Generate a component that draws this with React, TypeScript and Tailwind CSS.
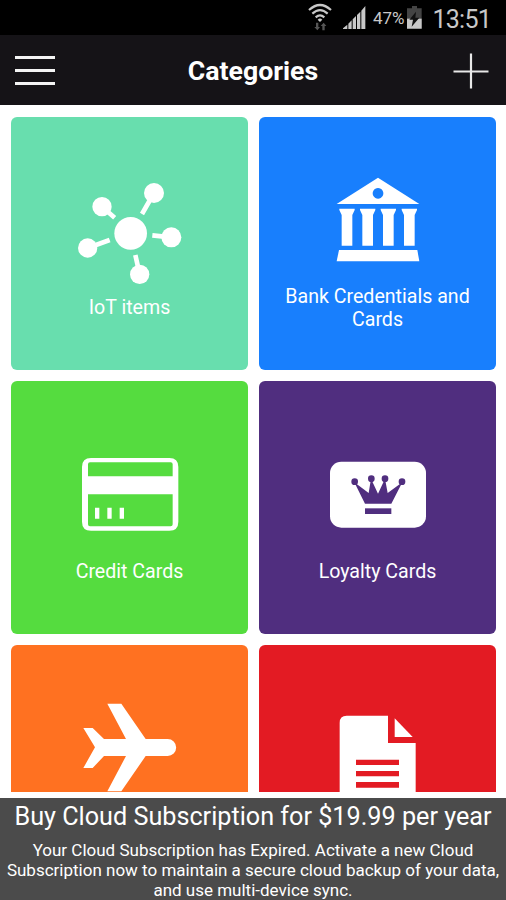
import type { ReactNode } from "react";

type TileProps = {
    color: string;
    viewBox: string;
    label?: string;
    children: ReactNode;
}

function StatusBar(){
    return(
        <div className="h-[35px] w-full bg-black flex items-center justify-end pr-[15px] text-[#c8c8c8]">
            <svg className="w-[24px] h-[28px] mr-[11px] mb-[2px]" viewBox="0 0 72 84" fill="none">
                <path d="M3 21 Q36 -9 69 21 M13 32 Q36 11 59 32 M23 43 Q36 31 49 43" stroke="#c8c8c8" strokeWidth="6.5"/>
                <path d="M29 50 Q36 43 43 50 L36 57Z" fill="#c8c8c8"/>
                <path d="M24 59h7v13h5l-8 10-9-10h5z M43 82h7V69h5l-8-10-9 10h5z" fill="#555"/>
            </svg>
            <svg className="w-[23px] h-[23px] mr-[7px]" viewBox="0 0 69 69" fill="#c8c8c8">
                <path d="M0 69V67L13 56V69Z M16 69V53L26 43V69Z M29 69V40L39 30V69Z M42 69V27L52 17V69Z M55 69V14L67 0V69Z"/>
            </svg>
            <span className="text-[17px] leading-none pt-[2px]">47%</span>
            <svg className="w-[15px] h-[23px] ml-[3px] mr-[10px]" viewBox="0 0 45 69">
                <path d="M15 0H30V7H44V68H0V7H15Z" fill="#444"/>
                <path d="M0 38H44V68H0Z" fill="#c8c8c8"/>
                <path d="M27 17L7 41H18L14 62L37 35H25Z" fill="#111"/>
            </svg>
            <span className="text-[25px] leading-none pt-[3px] tracking-[-0.75px]">13:51</span>
        </div>
    )
}

function Header(){
    return(
        <header className="h-[70px] w-full bg-[#151317] flex items-center justify-between pl-[15px] pr-[17px]">
            <div className="w-[40px] flex flex-col gap-[10px]">
                <div className="h-[3px] bg-[#f4f4f4]"/>
                <div className="h-[3px] bg-[#f4f4f4]"/>
                <div className="h-[3px] bg-[#f4f4f4]"/>
            </div>
            <h1 className="text-[26.7px] leading-none font-bold text-white pt-[2px] pr-[2px]">Categories</h1>
            <svg className="w-[36px] h-[36px] mt-[2px]" viewBox="0 0 36 36">
                <path d="M18 0.5V35.5M0.5 18.5H35.5" stroke="#e8e8e8" strokeWidth="2.2"/>
            </svg>
        </header>
    )
}

function Tile({ color, viewBox, label, children }: TileProps){
    return(
        <div className={`h-[253px] rounded-[6px] flex flex-col items-center justify-center text-center text-white text-[19.6px] leading-[23px] ${color}`}>
            <svg className="w-[128px] h-[128px] shrink-0" viewBox={viewBox} fill="white">
                {children}
            </svg>
            <div className="min-h-[23px] w-[200px]">{label}</div>
        </div>
    )
}

export default function App(){
    return(
        <div className="w-full h-[900px] flex flex-col overflow-hidden bg-white font-['Roboto',sans-serif]">
            <StatusBar/>
            <Header/>

            <main className="h-[687px] mb-[6px] shrink-0 overflow-hidden pt-[12px] pl-[11px] pr-[10px]">
                <div className="grid grid-cols-2 gap-[11px]">
                    <Tile color="bg-[#68deae]" viewBox="18 9 384 384" label="IoT items">
                        <circle cx="212" cy="205" r="49"/>
                        <circle cx="126" cy="125" r="29"/>
                        <circle cx="282" cy="84" r="30"/>
                        <circle cx="334" cy="217" r="30"/>
                        <circle cx="239" cy="328" r="29"/>
                        <circle cx="83" cy="249" r="29"/>
                        <path d="M126 125L164 158M282 84L246 147M334 217L277 211M239 328L226 270M83 249L149 225" stroke="white" strokeWidth="14"/>
                    </Tile>

                    <Tile color="bg-[#187ffd]" viewBox="12 -24 384 384" label="Bank Credentials and Cards">
                        <path fillRule="evenodd" d="M204 38L328 117H80Z M204 69a16 16 0 1 0 .1 0Z"/>
                        <path d="M88 131h46v4l-7 15v92H95V150l-7-15z M150 131h46v4l-7 15v92h-32V150l-7-15z M212 131h46v4l-7 15v92h-32V150l-7-15z M275 131h46v4l-7 15v92h-32V150l-7-15z"/>
                        <path d="M87 255H322L328 289H80Z"/>
                    </Tile>

                    <Tile color="bg-[#55dc3f]" viewBox="18 -23 384 384" label="Credit Cards">
                        <path fillRule="evenodd" d="M93 55H328Q355 55 355 82V246Q355 273 328 273H93Q66 273 66 246V82Q66 55 93 55Z M90 68Q84 68 84 74V110H338V74Q338 68 332 68Z M84 164V254Q84 260 90 260H332Q338 260 338 254V164Z"/>
                        <path d="M105 204h13v33h-13z M142 204h13v33h-13z M179 204h13v33h-13z"/>
                    </Tile>

                    <Tile color="bg-[#502e7f]" viewBox="12 -23 384 384" label="Loyalty Cards">
                        <rect x="60" y="66" width="288" height="198" rx="34"/>
                        <g fill="#502e7f">
                            <circle cx="134" cy="126" r="10"/>
                            <circle cx="184" cy="117" r="10"/>
                            <circle cx="225" cy="117" r="10"/>
                            <circle cx="276" cy="126" r="10"/>
                            <path d="M133 128L176 160L183 117L204 162L225 117L233 160L277 128L244 192H165Z"/>
                            <rect x="165" y="206" width="79" height="17"/>
                        </g>
                    </Tile>

                    <Tile color="bg-[#ff7121]" viewBox="18 18 384 384">
                        <path d="M142 41H184L257 147H323A25.5 25.5 0 0 1 323 198H257L184 304H142L198 198H132L98 234H70L105 172L70 114H98L132 147H198Z"/>
                    </Tile>

                    <Tile color="bg-[#e31b23]" viewBox="12 18 384 384">
                        <path d="M110 77H234V159H317V400H89V98Q89 77 110 77Z"/>
                        <path d="M254 85L308 141H254Z"/>
                        <path d="M138 209h129v16H138z M138 243h129v16H138z M138 276h129v17H138z" fill="#e31b23"/>
                    </Tile>
                </div>
            </main>

            <footer className="h-[102px] shrink-0 bg-[#4b4b4b] text-white text-center">
                <div className="text-[25.2px] leading-[30px] pt-[4px] whitespace-nowrap">Buy Cloud Subscription for $19.99 per year</div>
                <p className="text-[17px] leading-[20px] pt-[8px] whitespace-nowrap">
                    Your Cloud Subscription has Expired. Activate a new Cloud<br/>
                    Subscription now to maintain a secure cloud backup of your data,<br/>
                    and use multi-device sync.
                </p>
            </footer>
        </div>
    )
}
